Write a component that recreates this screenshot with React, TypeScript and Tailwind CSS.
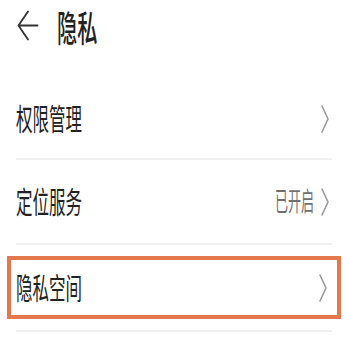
import React from 'react';

const font = { fontFamily: '"Noto Sans CJK SC", "Noto Sans", sans-serif' };

function Chevron() {
  return (
    <svg width="10" height="30" viewBox="0 0 10 30" className="shrink-0">
      <path d="M2 2 L8 15 L2 28" fill="none" stroke="#9a9a9a" strokeWidth="1.6" strokeLinecap="round" strokeLinejoin="round" />
    </svg>
  );
}

function Label({ text }: { text: string }) {
  return (
    <span className="inline-block origin-left -translate-y-[2px] scale-x-[0.55] whitespace-nowrap text-[30px] leading-none text-[#222]">
      {text}
    </span>
  );
}

export default function App() {
  return (
    <div className="h-[340px] w-[348px] overflow-hidden bg-white" style={font}>
      {/* Header */}
      <div className="flex h-[52px] items-center pl-[17px]">
        <svg width="22" height="32" viewBox="0 0 22 32" className="shrink-0">
          <path d="M11 1.5 L1.5 15.5 L11 29.5 M1.5 15.5 L20.5 15.5" fill="none" stroke="#333" strokeWidth="1.8" strokeLinecap="round" strokeLinejoin="round" />
        </svg>
        <span className="ml-[18px] inline-block origin-left scale-x-[0.56] whitespace-nowrap text-[36px] font-medium leading-none text-[#222]">
          隐私
        </span>
      </div>

      {/* 权限管理 */}
      <div className="mx-4 mt-[28px] flex h-[80px] items-center justify-between border-b-2 border-[#f0f0f0] pr-[2px]">
        <Label text="权限管理" />
        <Chevron />
      </div>

      {/* 定位服务 */}
      <div className="mx-4 flex h-[85px] items-center justify-between border-b-2 border-[#f0f0f0] pr-[2px]">
        <Label text="定位服务" />
        <div className="flex items-center gap-[6px]">
          <span className="inline-block origin-right -translate-y-[2px] scale-x-[0.5] whitespace-nowrap text-[26px] leading-none text-[#6f6f6f]">
            已开启
          </span>
          <Chevron />
        </div>
      </div>

      {/* 隐私空间 (highlighted) */}
      <div className="mx-[7px] mt-[11px] flex h-[63px] items-center justify-between border-4 border-[#e4774c] pl-[5px] pr-[9px]">
        <Label text="隐私空间" />
        <Chevron />
      </div>

      <div className="mx-4 mt-[11px] h-[2px] bg-[#f0f0f0]" />
    </div>
  );
}
